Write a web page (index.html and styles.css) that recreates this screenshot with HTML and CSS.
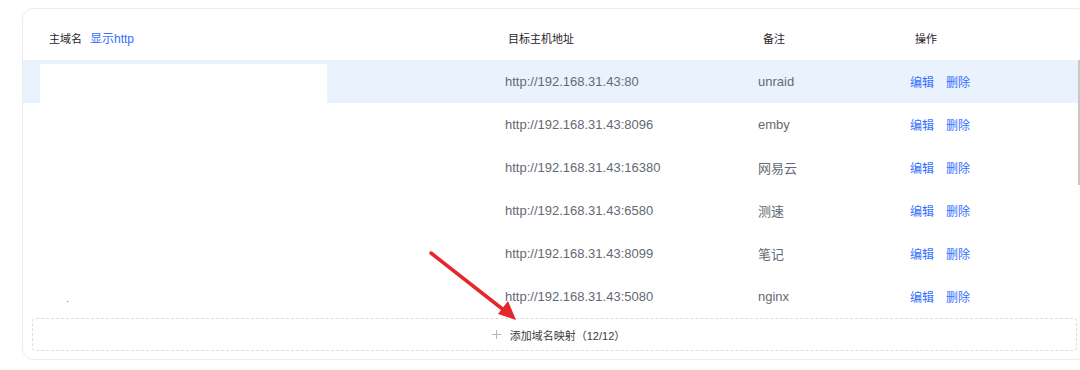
FILE: index.html
```html
<!DOCTYPE html>
<html lang="zh-CN">
<head>
<meta charset="utf-8">
<title>域名映射</title>
<link rel="stylesheet" href="styles.css">
</head>
<body>
<div class="card">
  <div class="thead">
    <div class="th th-domain"><span>主域名</span><a class="toggle">显示http</a></div>
    <div class="th th-target">目标主机地址</div>
    <div class="th th-note">备注</div>
    <div class="th th-op">操作</div>
  </div>
  <div class="tbody">
    <div class="tr active">
      <div class="td td-domain"><div class="mask"></div></div>
      <div class="td td-url">http://192.168.31.43:80</div>
      <div class="td td-note">unraid</div>
      <div class="td td-op"><a>编辑</a><a>删除</a></div>
    </div>
    <div class="tr">
      <div class="td td-domain"></div>
      <div class="td td-url">http://192.168.31.43:8096</div>
      <div class="td td-note">emby</div>
      <div class="td td-op"><a>编辑</a><a>删除</a></div>
    </div>
    <div class="tr">
      <div class="td td-domain"></div>
      <div class="td td-url">http://192.168.31.43:16380</div>
      <div class="td td-note">网易云</div>
      <div class="td td-op"><a>编辑</a><a>删除</a></div>
    </div>
    <div class="tr">
      <div class="td td-domain"></div>
      <div class="td td-url">http://192.168.31.43:6580</div>
      <div class="td td-note">测速</div>
      <div class="td td-op"><a>编辑</a><a>删除</a></div>
    </div>
    <div class="tr">
      <div class="td td-domain"></div>
      <div class="td td-url">http://192.168.31.43:8099</div>
      <div class="td td-note">笔记</div>
      <div class="td td-op"><a>编辑</a><a>删除</a></div>
    </div>
    <div class="tr">
      <div class="td td-domain"><span class="dot">.</span></div>
      <div class="td td-url">http://192.168.31.43:5080</div>
      <div class="td td-note">nginx</div>
      <div class="td td-op"><a>编辑</a><a>删除</a></div>
    </div>
    <div class="scroll-thumb"></div>
  </div>
  <div class="add-box">
    <svg class="plus" width="9" height="9" viewBox="0 0 9 9"><path d="M4.5 0v9M0 4.5h9" stroke="#b5b8bd" stroke-width="1"/></svg>
    <span>添加域名映射（12/12）</span>
  </div>
</div>
<svg class="arrow" width="100" height="80" viewBox="0 0 100 80">
  <line x1="2" y1="2" x2="76" y2="60" stroke="#e5262b" stroke-width="3.5" stroke-linecap="round"/>
  <polygon points="87,69 69,63 79,50" fill="#e5262b"/>
</svg>
</body>
</html>
```
FILE: styles.css
```css
* { box-sizing: border-box; }
html, body { margin: 0; padding: 0; }
body {
  width: 1080px;
  height: 370px;
  overflow: hidden;
  background: #ffffff;
  font-family: "Liberation Sans", "Noto Sans CJK SC", sans-serif;
  position: relative;
}
.card {
  margin: 8px 0 0 22px;
  width: 1066px;
  height: 352px;
  border: 1px solid #ececec;
  border-radius: 12px;
  padding: 0 0 8px 0;
  display: flex;
  flex-direction: column;
}
.thead, .tr {
  display: grid;
  grid-template-columns: 482px 253px 152px 1fr;
}
.thead {
  height: 51px;
  padding-top: 6px;
  align-items: center;
  font-size: 11px;
  color: #1f2329;
}
.th-domain { padding-left: 26px; display: flex; align-items: center; gap: 8px; }
.toggle { color: #3370ff; font-size: 12px; }
.th-target { padding-left: 3px; }
.th-note { padding-left: 5px; }
.th-op { padding-left: 5px; }
.tbody { position: relative; }
.tr {
  height: 43px;
  align-items: center;
  font-size: 13px;
  color: #646a73;
}
.tr.active { background: #eaf2fe; }
.td-domain { height: 100%; display: flex; align-items: flex-end; }
.mask {
  margin-left: 17px;
  width: 287px;
  height: 39px;
  background: #ffffff;
}
.dot { padding-left: 43px; padding-bottom: 14px; font-size: 11px; color: #888; line-height: 1; }
.td-note { color: #646a73; }
.td-op { display: flex; gap: 12px; font-size: 12px; }
.td-op a { color: #3370ff; }
.scroll-thumb {
  position: absolute;
  left: 1055px;
  top: 0;
  width: 2px;
  height: 125px;
  background: #c8c8c8;
}
.add-box {
  margin: 0 10px 0 9px;
  height: 33px;
  border: 1px dashed #dcdcdc;
  border-radius: 4px;
  display: flex;
  align-items: center;
  justify-content: center;
  gap: 9px;
  font-size: 11px;
  color: #3a3d42;
  padding-left: 8px;
}
.add-box span { padding-top: 1px; }
.arrow {
  position: absolute;
  left: 429px;
  top: 251px;
}
```
